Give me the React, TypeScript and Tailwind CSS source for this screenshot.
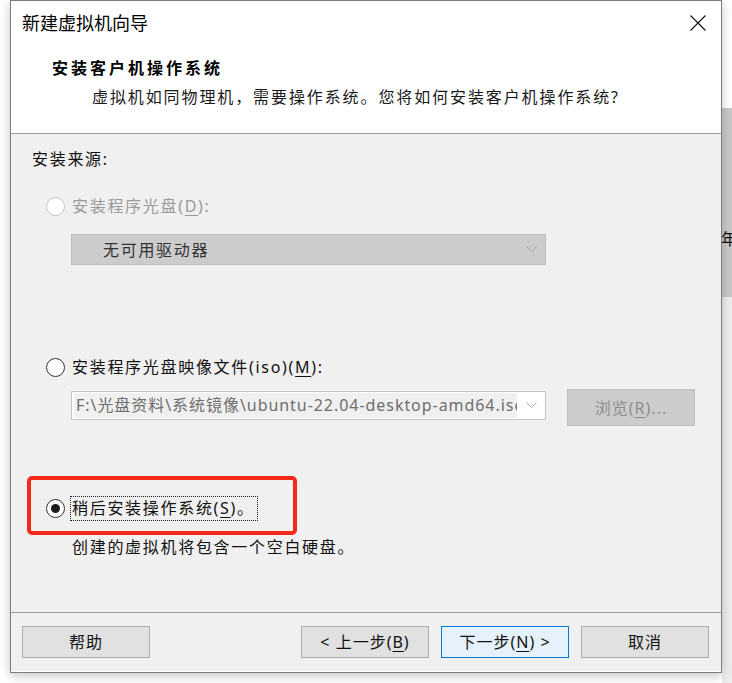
import type { ReactNode } from 'react';

// New VM wizard — "install guest OS" page, Windows-style dialog.

const FONT = "font-['Noto_Sans','Noto_Sans_CJK_SC',sans-serif]";

function Radio({ state }: { state: 'disabled' | 'off' | 'on' }) {
  const border = state === 'disabled' ? 'border-[#c4c4c4]' : 'border-[#333333]';
  return (
    <span
      className={`flex h-[19px] w-[19px] shrink-0 items-center justify-center rounded-full border bg-white ${border}`}
    >
      {state === 'on' && <span className="h-[9px] w-[9px] rounded-full bg-[#1c1c1c]" />}
    </span>
  );
}

function Chevron() {
  return (
    <svg width="11" height="7" viewBox="0 0 11 7" fill="none" stroke="#a6a6a6" strokeWidth="1">
      <path d="M0.5 0.5 L5.5 5.5 L10.5 0.5" />
    </svg>
  );
}

function U({ children }: { children: ReactNode }) {
  return <span className="underline underline-offset-[3px]">{children}</span>;
}

function Btn({ children, primary }: { children: ReactNode; primary?: boolean }) {
  return (
    <button
      type="button"
      className={`flex h-[32px] w-[128px] items-center justify-center border text-[16px] tracking-[1px] text-[#111] ${
        primary ? 'border-[#0078d7] bg-[#e5f1fb]' : 'border-[#adadad] bg-[#e1e1e1]'
      }`}
    >
      {children}
    </button>
  );
}

export default function App() {
  return (
    <div className={`flex h-[683px] w-[732px] overflow-hidden bg-white ${FONT}`}>
      <div className="w-[10px] shrink-0" />

      {/* Dialog */}
      <div className="relative z-10 flex h-[673px] w-[712px] shrink-0 flex-col border border-[#7d7d7d] bg-white shadow-[0_3px_10px_rgba(0,0,0,0.22)]">
        {/* Header */}
        <div className="h-[133px] shrink-0 border-b border-[#a0a0a0] bg-white">
          <div className="flex h-[44px] items-center justify-between">
            <span className="pl-[11px] text-[18px] text-[#000]">新建虚拟机向导</span>
            <span className="flex h-[44px] w-[46px] items-center justify-center">
              <svg width="16" height="16" viewBox="0 0 16 16" stroke="#111" strokeWidth="1.1">
                <path d="M0.5 0.5 L15.5 15.5 M15.5 0.5 L0.5 15.5" />
              </svg>
            </span>
          </div>
          <div className="mt-[12px] h-[22px] pl-[41px] text-[16px] font-bold leading-[22px] tracking-[3px] text-[#000]">
            安装客户机操作系统
          </div>
          <div className="mt-[7px] h-[22px] pl-[81px] text-[16px] leading-[22px] tracking-[1.9px] text-[#1a1a1a]">
            虚拟机如同物理机，需要操作系统。您将如何安装客户机操作系统?
          </div>
        </div>

        {/* Body */}
        <div className="relative flex h-[478px] shrink-0 flex-col bg-[#f0f0f0] pl-[21px] text-[16px] tracking-[1.7px] text-[#111]">
          <div className="mt-[14px] h-[22px] leading-[22px]">安装来源:</div>

          <div className="mt-[25px] flex h-[22px] items-center">
            <span className="ml-[14px]">
              <Radio state="disabled" />
            </span>
            <span className="ml-[7px] text-[#9a9a9a]">
              安装程序光盘(<U>D</U>):
            </span>
          </div>

          <div className="ml-[39px] mt-[17px] flex h-[31px] w-[475px] items-center justify-between border border-[#bdbdbd] bg-[#cccccc] pl-[31px] pr-[8px]">
            <span className="text-[#333]">无可用驱动器</span>
            <Chevron />
          </div>

          <div className="mt-[91px] flex h-[22px] items-center">
            <span className="ml-[14px]">
              <Radio state="off" />
            </span>
            <span className="ml-[7px]">
              安装程序光盘映像文件(iso)(<U>M</U>):
            </span>
          </div>

          <div className="mt-[11px] flex h-[37px] items-start">
            <div className="ml-[39px] mt-[2px] flex h-[29px] w-[475px] items-center justify-between border border-[#c6c6c6] bg-white pl-[2px] pr-[8px]">
              <span className="h-[25px] w-[443px] overflow-hidden whitespace-nowrap bg-[#f0f0f0] pl-[2px] leading-[25px] tracking-[0.95px] text-[#6d6d6d]">
                F:\光盘资料\系统镜像\ubuntu-22.04-desktop-amd64.iso
              </span>
              <Chevron />
            </div>
            <div className="ml-[21px] flex h-[37px] w-[128px] items-center justify-center border border-[#bfbfbf] bg-[#cccccc] tracking-[1px] text-[#8c8c8c]">
              浏览(<U>R</U>)...
            </div>
          </div>

          <div className="mt-[70px] flex h-[25px] items-center">
            <span className="ml-[14px]">
              <Radio state="on" />
            </span>
            <span className="ml-[5px] h-[25px] border border-dotted border-[#222] pl-[1px] pr-[2px] leading-[23px]">
              稍后安装操作系统(<U>S</U>)。
            </span>
          </div>

          <div className="ml-[40px] mt-[15px] h-[22px] leading-[22px]">创建的虚拟机将包含一个空白硬盘。</div>

          {/* annotation box drawn over the screenshot */}
          <div className="pointer-events-none absolute left-[16px] top-[342px] h-[59px] w-[270px] rounded-[5px] border-[4px] border-[#f5281c]" />
        </div>

        {/* Footer */}
        <div className="flex h-[59px] shrink-0 items-start border-t border-[#a0a0a0] bg-[#f0f0f0] pl-[11px] pr-[12px] pt-[13px]">
          <Btn>帮助</Btn>
          <div className="flex-1" />
          <div className="flex gap-[12px]">
            <Btn>
              &lt; 上一步(<U>B</U>)
            </Btn>
            <Btn primary>
              下一步(<U>N</U>) &gt;
            </Btn>
            <Btn>取消</Btn>
          </div>
        </div>
      </div>

      {/* Window behind, peeking out on the right */}
      <div className="flex h-full w-[10px] shrink-0 flex-col overflow-hidden">
        <div className="h-[108px] shrink-0 bg-white" />
        <div className="h-[189px] shrink-0 overflow-hidden bg-[#c9c9c9] pt-[120px]">
          <span className="-ml-[1px] block h-[22px] text-[16px] leading-[22px] text-[#111]">年</span>
        </div>
        <div className="flex-1 bg-[#ededed]" />
      </div>
    </div>
  );
}
